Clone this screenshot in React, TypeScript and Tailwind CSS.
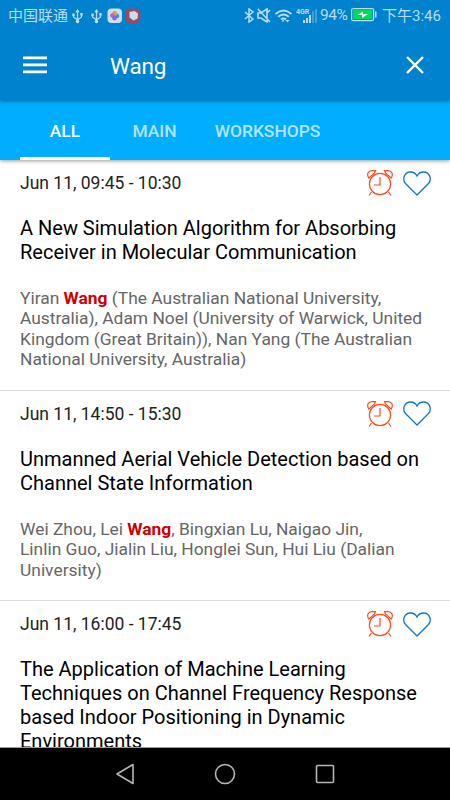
import React from "react";

interface Session {
  time: string;
  title: string[];
  authors: string[];
}

const QUERY = "Wang";

const sessions: Session[] = [
  {
    time: "Jun 11, 09:45 - 10:30",
    title: [
      "A New Simulation Algorithm for Absorbing",
      "Receiver in Molecular Communication",
    ],
    authors: [
      "Yiran Wang (The Australian National University,",
      "Australia), Adam Noel (University of Warwick, United",
      "Kingdom (Great Britain)), Nan Yang (The Australian",
      "National University, Australia)",
    ],
  },
  {
    time: "Jun 11, 14:50 - 15:30",
    title: [
      "Unmanned Aerial Vehicle Detection based on",
      "Channel State Information",
    ],
    authors: [
      "Wei Zhou, Lei Wang, Bingxian Lu, Naigao Jin,",
      "Linlin Guo, Jialin Liu, Honglei Sun, Hui Liu (Dalian",
      "University)",
    ],
  },
  {
    time: "Jun 11, 16:00 - 17:45",
    title: [
      "The Application of Machine Learning",
      "Techniques on Channel Frequency Response",
      "based Indoor Positioning in Dynamic",
      "Environments",
    ],
    authors: [],
  },
];

const UsbIcon = () => (
  <svg width="11" height="15" viewBox="0 0 11 15" fill="none" stroke="currentColor">
    <path d="M5.5 2v10M1.5 6v2l4 3M9.5 5.5V8l-4 3" strokeWidth="1.3" />
    <path d="M5.5 0 3.3 3.2h4.4zM.3 4.5h2.4v2.4H.3zM8.3 4h2.4v2.4H8.3z" fill="currentColor" stroke="none" />
    <circle cx="5.5" cy="12.5" r="1.8" fill="currentColor" stroke="none" />
  </svg>
);

const StatusBar = () => (
  <div className="flex h-8 items-center text-[#b8dcf2]">
    <span className="ml-2 w-[61px] text-[15px] leading-8">中国联通</span>
    <span className="ml-[3px]">
      <UsbIcon />
    </span>
    <span className="ml-[8px]">
      <UsbIcon />
    </span>
    <svg className="-mt-px ml-[5px]" width="34" height="16" viewBox="0 0 34 16">
      <rect x=".5" y=".5" width="14.5" height="14.5" rx="4" fill="#cddfed" />
      <circle cx="7.7" cy="5.5" r="2.5" fill="#ee8a62" />
      <circle cx="5.3" cy="7.5" r="2.3" fill="#b66bc7" />
      <circle cx="10" cy="8" r="2.3" fill="#4c84df" />
      <circle cx="7.5" cy="10" r="2.4" fill="#7a6be0" />
      <circle cx="9" cy="6" r="1.5" fill="#8fc07a" />
      <rect x="18.5" y=".5" width="15" height="14.5" rx="4" fill="#8e4e6c" />
      <path d="m22.5 4 5-1 3.5 2.5-.5 5-4 2-4-3z" fill="#d5d9e2" />
    </svg>

    <svg className="-mt-px ml-auto" width="10" height="15" viewBox="0 0 10 15" fill="none" stroke="currentColor" strokeWidth="1.5">
      <path d="m1 4 8 7-4 3V1l4 3-8 7" />
    </svg>
    <svg className="-mt-px ml-[3px]" width="14" height="15" viewBox="0 0 14 15" fill="none" stroke="currentColor" strokeWidth="1.6">
      <path d="M1 5h3l6-4v13l-6-4H1zM1 1l12 13M13 2l-3 3" />
    </svg>
    <svg className="-mt-px ml-[4px]" width="17" height="14" viewBox="0 0 17 14" fill="none" stroke="currentColor" strokeWidth="1.9">
      <path d="M.5 5Q8.500-2 16.500 5M3.200 7.800q5.300-4.800 10.600 0M6 10.500q2.500-2.200 5 0" />
      <path d="m6.500 12.500 1.500-2 1.500 2zM10.500 11h4l-2 2.500z" fill="currentColor" stroke="none" />
    </svg>
    <div className="relative ml-[4px] h-4 w-[21px]">
      <span className="absolute top-0 left-0 font-['Roboto'] text-[7px] leading-[8px] font-bold">4GR</span>
      <svg className="absolute inset-0" width="21" height="16" viewBox="0 0 21 16" fill="currentColor">
        <path d="M7 12h2v3H7zM10 10h2v5h-2zM13 7h2v8h-2z" />
        <path d="M16 3h2v12h-2zM19 1h2v14h-2z" opacity=".35" />
      </svg>
    </div>
    <span className="-mt-px ml-[3px] w-[27px] text-[15.5px] tracking-[-0.4px]">94%</span>
    <svg className="-mt-[2px] ml-[4px]" width="26" height="14" viewBox="0 0 26 14">
      <rect x=".6" y=".6" width="22" height="12" rx="1.5" fill="none" stroke="#b8dcf2" strokeWidth="1.2" />
      <rect x="2" y="2" width="19.2" height="9.2" fill="#00d95a" />
      <path d="m6 7 6-3.500v2.500h5l-6 4V7z" fill="#e6faed" />
      <path d="M24 3.500h1.500v6H24z" fill="#b8dcf2" />
    </svg>
    <span className="mr-[10px] ml-[5px] w-[58px] text-[15px] leading-8 whitespace-nowrap">下午3:46</span>
  </div>
);

const AlarmIcon = () => (
  <svg width="26" height="26" viewBox="0 0 26 26" fill="none" stroke="#ff4a1c" strokeWidth="1.2">
    <circle cx="13" cy="14" r="10.6" />
    <path d="M13 7v8H7M4.500 22 2 25.500M21.500 22l2.500 3.500" />
    <path d="M1.800 8C-.8 4 1.500.6 5 .6h3.500L7.500 3zM24.200 8C26.800 4 24.500.6 21 .6h-3.500l1 2.400z" />
  </svg>
);

const HeartIcon = () => (
  <svg width="28" height="25" viewBox="0 0 28 25" fill="none" stroke="#1277c8" strokeWidth="1.3">
    <path d="M14 24 2.500 12.500C-1 8.500 1 1 7.500 1 11 1 13 3 14 5c1-2 3-4 6.500-4C27 1 29 8.500 25.500 12.500z" />
  </svg>
);

const Highlighted = ({ text }: { text: string }) => {
  const [before, after] = text.split(QUERY);
  if (after === undefined) return <>{text}</>;
  return (
    <>
      {before}
      <b className="font-bold text-[#d00000]">{QUERY}</b>
      {after}
    </>
  );
};

const SessionItem = ({ session }: { session: Session }) => (
  <li className="border-b border-[#dedede] px-5 pt-[10px] pb-5">
    <div className="flex h-[27px] items-center">
      <span className="text-[17.5px] text-[#222]">{session.time}</span>
      <div className="-mt-px -mr-[0.5px] ml-auto flex items-center gap-[9.5px]">
        <AlarmIcon />
        <HeartIcon />
      </div>
    </div>
    <h2 className="mt-[20.3px] text-[20px] leading-[23.8px] whitespace-nowrap text-black">
      {session.title.map((line) => (
        <div key={line}>{line}</div>
      ))}
    </h2>
    <div className="mt-[23.2px] text-[17.4px] leading-[20.4px] whitespace-nowrap text-[#666]">
      {session.authors.map((line) => (
        <div key={line}>
          <Highlighted text={line} />
        </div>
      ))}
    </div>
  </li>
);

const App: React.FC = () => (
  <div className="flex h-[800px] w-[450px] flex-col overflow-hidden bg-white font-['Roboto','Noto_Sans_CJK_SC',sans-serif]">
    <header className="relative z-20 h-[100px] shrink-0 bg-[#0082ce] shadow-[0_1px_4px_rgba(0,0,0,0.4)]">
      <StatusBar />
      <div className="flex h-[66px] items-center pr-[26px] pl-[23px] text-white">
        <svg width="24" height="18" viewBox="0 0 24 18" fill="currentColor">
          <path d="M0 .5h24v2.800H0zM0 7.500h24v2.800H0zM0 14.500h24v2.800H0z" />
        </svg>
        <h1 className="ml-[63px] pt-[3px] text-[22.5px] tracking-[-0.2px]">{QUERY}</h1>
        <svg className="ml-auto" width="18" height="18" viewBox="0 0 18 18" stroke="currentColor" strokeWidth="2.4">
          <path d="m1 1 16 16M17 1 1 17" />
        </svg>
      </div>
    </header>
    <nav className="relative z-10 flex h-[60px] shrink-0 bg-[#00adff] pl-5 text-[17.4px] font-medium text-white/70 shadow-[0_1px_4px_rgba(0,0,0,0.4)]">
      <button className="w-[90px] border-b-3 border-white pt-[5px] text-white">ALL</button>
      <button className="w-[89px] pt-[2px]">MAIN</button>
      <button className="w-[137px] pt-[2px]">WORKSHOPS</button>
    </nav>
    <main className="min-h-0 flex-1 overflow-hidden">
      <ul>
        {sessions.map((session) => (
          <SessionItem key={session.time} session={session} />
        ))}
      </ul>
    </main>
    <footer className="flex h-[53px] shrink-0 items-center justify-center gap-[79px] border-t border-[#999] bg-black text-[#b5b5b5]">
      <svg width="20" height="22" viewBox="0 0 20 22" fill="none" stroke="currentColor" strokeWidth="1.6">
        <path d="M18 1.500v19L2 11z" strokeLinejoin="round" />
      </svg>
      <svg width="22" height="22" viewBox="0 0 22 22" fill="none" stroke="currentColor" strokeWidth="1.6">
        <circle cx="11" cy="11" r="9.5" />
      </svg>
      <svg width="20" height="20" viewBox="0 0 20 20" fill="none" stroke="currentColor" strokeWidth="1.6">
        <rect x="1.500" y="1.500" width="17" height="17" rx="1" />
      </svg>
    </footer>
  </div>
);

export default App;
